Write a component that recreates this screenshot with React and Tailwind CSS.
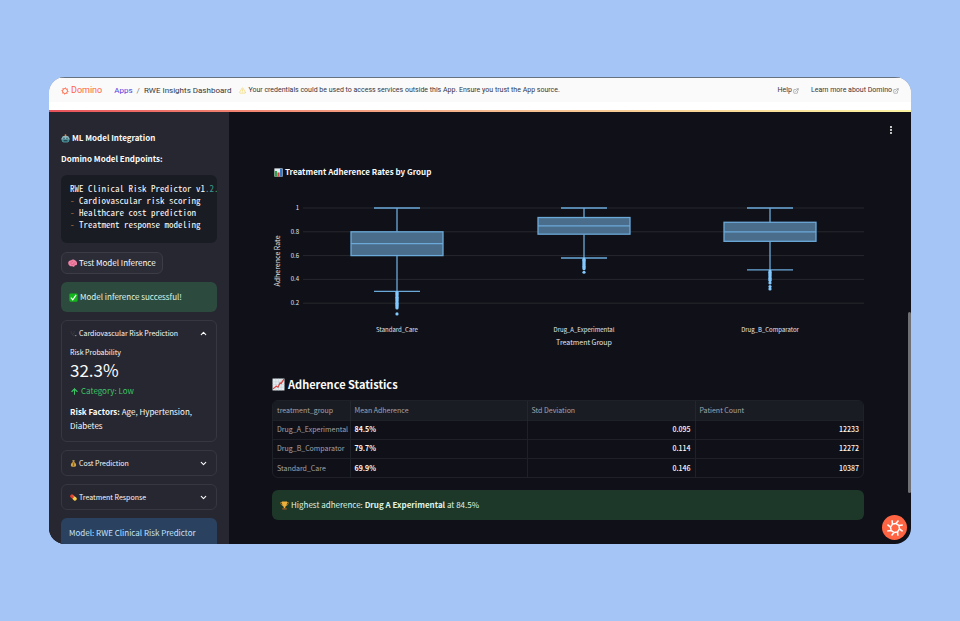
import React, { useState } from 'react';
import { ArrowUp, ChevronDown, ChevronUp, EllipsisVertical, ExternalLink, TriangleAlert } from 'lucide-react';

const groups = [
  { name: 'Standard_Care', x: 125, q1: 0.6, median: 0.7, q3: 0.8, low: 0.3, high: 1, outliers: [0.29, 0.28, 0.27, 0.26, 0.25, 0.24, 0.23, 0.22, 0.21, 0.2, 0.19, 0.18, 0.17, 0.16, 0.11] },
  { name: 'Drug_A_Experimental', x: 312, q1: 0.78, median: 0.85, q3: 0.92, low: 0.58, high: 1, outliers: [0.57, 0.56, 0.55, 0.54, 0.53, 0.52, 0.51, 0.5, 0.49, 0.46] },
  { name: 'Drug_B_Comparator', x: 498, q1: 0.72, median: 0.8, q3: 0.88, low: 0.48, high: 1, outliers: [0.47, 0.46, 0.45, 0.44, 0.43, 0.42, 0.41, 0.4, 0.39, 0.37, 0.34, 0.32] },
];

const stats = [
  { group: 'Drug_A_Experimental', mean: '84.5%', std: '0.095', count: 12233 },
  { group: 'Drug_B_Comparator', mean: '79.7%', std: '0.114', count: 12272 },
  { group: 'Standard_Care', mean: '69.9%', std: '0.146', count: 10387 },
];

const ticks = [1, 0.8, 0.6, 0.4, 0.2];
const yPos = (v) => 24 + (1 - v) * 119;

// Icons
function DominoMark({ className }) {
  return (
    <svg className={className} viewBox="0 0 24 24" fill="none" stroke="currentColor" strokeWidth="2" strokeLinejoin="round" aria-hidden="true">
      {[0, 45, 90, 135, 180, 225, 270, 315].map(a => (
        <path key={a} d="M9.4 6.8 L13.2 6 L16.6 1.9" transform={`rotate(${a} 12 12)`} />
      ))}
    </svg>
  );
}

function DominoRing({ className }) {
  return (
    <svg className={className} viewBox="0 0 24 24" fill="none" stroke="currentColor" strokeWidth="2.6" aria-hidden="true">
      <circle cx="12" cy="12" r="7.5" />
      {[0, 45, 90, 135, 180, 225, 270, 315].map(a => (
        <path key={a} d="M12 5 L13.5 1.5" transform={`rotate(${a} 12 12)`} />
      ))}
    </svg>
  );
}

function RobotIcon({ className }) {
  return (
    <svg className={className} viewBox="0 0 24 24" aria-hidden="true">
      <circle cx="12" cy="3" r="2.5" fill="#e08a4a" />
      <rect x="0.5" y="10" width="23" height="7" rx="2" fill="#5b8792" />
      <path d="M3 9a4 4 0 0 1 4-4h10a4 4 0 0 1 4 4v9a4 4 0 0 1-4 4H7a4 4 0 0 1-4-4z" fill="#8fb8c0" />
      <path d="M3 14h18v4a4 4 0 0 1-4 4H7a4 4 0 0 1-4-4z" fill="#3f8791" />
      <circle cx="8" cy="11" r="2" fill="#2b4c55" />
      <circle cx="16" cy="11" r="2" fill="#2b4c55" />
      <rect x="7" y="16" width="10" height="3" rx="1" fill="#264951" />
    </svg>
  );
}

function BrainIcon({ className }) {
  return (
    <svg className={className} viewBox="0 0 24 24" aria-hidden="true">
      <path d="M1 13C-1 7 4 3 8 3c3-3 9-2 11 1 4 1 6 6 5 10-1 3-4 3-6 3 0 3-4 5-6 2-3 1-10 0-11-6z" fill="#f283a5" />
      <path d="M5 12c2-3 4 0 6-3m-2-4c1 2 3 2 5 1m0 6c3-3 5 0 7-2M8 16c3-2 5-1 9-1" fill="none" stroke="#c14a74" strokeWidth="1.4" />
    </svg>
  );
}

function CheckIcon({ className }) {
  return (
    <svg className={className} viewBox="0 0 24 24" aria-hidden="true">
      <rect x="1" y="1" width="22" height="22" rx="3" fill="#12b51c" />
      <path d="M5 12.5l5 5.5L19 5" fill="none" stroke="#fff" strokeWidth="3" />
    </svg>
  );
}

function StethoscopeIcon({ className }) {
  return (
    <svg className={className} viewBox="0 0 24 24" fill="none" stroke="#44454e" strokeWidth="2" aria-hidden="true">
      <path d="M4 3v6a5 5 0 0 0 10 0V3M9 14v2a4 4 0 0 0 8 0" />
      <circle cx="20" cy="19" r="2" fill="#b5b6bc" stroke="none" />
    </svg>
  );
}

function MoneyBagIcon({ className }) {
  return (
    <svg className={className} viewBox="0 0 24 24" aria-hidden="true">
      <path d="M8 1h8l-2 6h-4z" fill="#d9b25a" />
      <path d="M9 7h6c4 3 6 7 6 11 0 4-3 5-9 5s-9-1-9-5c0-4 2-8 6-11z" fill="#d3a546" />
      <path d="M8 7h8" stroke="#7a5720" strokeWidth="2" />
      <path d="M15 12c-4-2-7 1-3 3s2 5-3 3M12 10v11" fill="none" stroke="#69491a" strokeWidth="1.5" />
    </svg>
  );
}

function PillIcon({ className }) {
  return (
    <svg className={className} viewBox="0 0 24 24" aria-hidden="true">
      <g transform="rotate(42 12 12)">
        <path d="M12 6H5a6 6 0 0 0 0 12h7z" fill="#e0402c" />
        <path d="M12 6h7a6 6 0 0 1 0 12h-7z" fill="#f6cf45" />
        <path d="M5 9h13" stroke="#fff" strokeOpacity="0.6" strokeWidth="1.5" />
      </g>
    </svg>
  );
}

function BarsIcon({ className }) {
  return (
    <svg className={className} viewBox="0 0 24 24" aria-hidden="true">
      <rect x="1" y="1" width="22" height="22" fill="#e3ebee" />
      <rect x="2" y="8" width="6" height="15" fill="#2f9e4f" />
      <rect x="9" y="12" width="6" height="11" fill="#d6423d" />
      <rect x="16" y="2" width="6" height="21" fill="#3577c4" />
    </svg>
  );
}

function TrendIcon({ className }) {
  return (
    <svg className={className} viewBox="0 0 24 24" aria-hidden="true">
      <rect x="1" y="1" width="22" height="22" fill="#e3ebee" />
      <path d="M1 7h22M1 12h22M1 17h22M7 1v22M12 1v22M17 1v22" stroke="#b7cbd3" strokeWidth="0.8" />
      <path d="M2 20l6-5 3 2 4-8 2 1 5-8" fill="none" stroke="#d6423d" strokeWidth="2.2" />
    </svg>
  );
}

function TrophyIcon({ className }) {
  return (
    <svg className={className} viewBox="0 0 24 24" aria-hidden="true">
      <path d="M6 4H2c0 5 2 7 6 8M18 4h4c0 5-2 7-6 8" fill="none" stroke="#d9952b" strokeWidth="2" />
      <path d="M5 1h14c0 8-2 13-5 14v4h-4v-4C7 14 5 9 5 1z" fill="#eeb03a" />
      <path d="M6 19h12v4H6z" fill="#8a5527" />
    </svg>
  );
}

function TopBar() {
  return (
    <header className="shrink-0 border-t border-[#66727f] bg-white font-['Roboto',sans-serif] text-[#35363f]">
      <div className="flex h-6 items-center bg-[#fafafa] px-3 pt-px">
        <a href="#home" className="flex items-center gap-[2px] text-[9px] text-[#ff6543]">
          <DominoRing className="size-2" />
          Domino
        </a>
        <nav className="ml-3 flex items-center gap-1 text-[8px]" aria-label="Breadcrumb">
          <a href="#apps" className="text-[#543fde]">Apps</a>
          <span className="text-[#77787f]">/</span>
          <span>RWE Insights Dashboard</span>
        </nav>
        <p className="ml-2 flex items-center gap-[2px] text-[7px]">
          <TriangleAlert className="size-[7px] text-[#f5d04c]" />
          Your credentials could be used to access services outside this App. Ensure you trust the App source.
        </p>
        <div className="ml-auto flex items-center gap-3 text-[7px]">
          <a href="#help" className="flex items-center gap-px">Help <ExternalLink className="size-[6px] text-[#77787f]" /></a>
          <a href="#learn" className="flex items-center gap-px">Learn more about Domino <ExternalLink className="size-[6px] text-[#77787f]" /></a>
        </div>
      </div>
      <div className="h-2" />
      <div className="h-[2px] bg-gradient-to-r from-[#e8525a] via-[#f5b98f] to-[#fbf3a0]" />
    </header>
  );
}

function Expander({ icon, title, open, onToggle, children }) {
  return (
    <section className="rounded-md border border-[#363740]">
      <button type="button" aria-expanded={open} onClick={onToggle} className="flex h-6 w-full items-center gap-[2px] px-2 text-[7px]">
        {icon}
        <span>{title}</span>
        {open
          ? <ChevronUp className="ml-auto size-[9px]" strokeWidth={3} />
          : <ChevronDown className="ml-auto size-[9px]" strokeWidth={3} />}
      </button>
      {open && <div className="px-2 pb-2">{children}</div>}
    </section>
  );
}

function Sidebar() {
  const [open, setOpen] = useState({ risk: true, cost: false, treatment: false });
  const toggle = (key) => setOpen({ ...open, [key]: !open[key] });

  return (
    <aside className="w-[180px] shrink-0 overflow-hidden bg-[#262730] px-3 pt-5">
      <h2 className="flex h-3 items-center gap-[2px] text-[8px] font-bold">
        <RobotIcon className="size-[9px]" />
        ML Model Integration
      </h2>
      <p className="mt-[9px] text-[8px] leading-3 font-bold">Domino Model Endpoints:</p>

      <pre className="mt-[10px] overflow-hidden rounded-md bg-[#1a1c24] px-[9px] pt-2 pb-3 font-['Noto_Sans_Mono_CJK_SC','Liberation_Mono',monospace] text-[9px] leading-3">
        {'RWE Clinical Risk Predictor v1'}<span className="text-[#3d9d8b]">.2.</span>{'\n'}
        <span className="text-[#a8683c]">-</span>{' Cardiovascular risk scoring\n'}
        <span className="text-[#a8683c]">-</span>{' Healthcare cost prediction\n'}
        <span className="text-[#a8683c]">-</span>{' Treatment response modeling'}
      </pre>

      <button type="button" className="mt-[9px] flex h-[22px] items-center gap-[2px] rounded-md border border-[#3b3c45] bg-[#2b2c36] px-[6px] text-[8px]">
        <BrainIcon className="size-[9px]" />
        Test Model Inference
      </button>

      <div role="status" className="mt-2 flex h-[30px] items-center gap-[2px] rounded-md bg-[#2d4a3e] px-2 text-[8px] text-[#dff5e6]">
        <CheckIcon className="size-[9px]" />
        Model inference successful!
      </div>

      <div className="mt-2 flex flex-col gap-2">
        <Expander icon={<StethoscopeIcon className="size-[7px]" />} title="Cardiovascular Risk Prediction" open={open.risk} onToggle={() => toggle('risk')}>
          <p className="mt-px text-[7px] leading-3">Risk Probability</p>
          <p className="text-[17px] leading-6">32.3%</p>
          <p className="mt-[3px] flex items-center gap-[2px] text-[8px] leading-3 text-[#3dc465]">
            <ArrowUp className="size-[9px]" strokeWidth={3} />
            Category: Low
          </p>
          <p className="mt-2 text-[8px] leading-[14px]"><b>Risk Factors:</b> Age, Hypertension, Diabetes</p>
        </Expander>
        <Expander icon={<MoneyBagIcon className="size-[7px]" />} title="Cost Prediction" open={open.cost} onToggle={() => toggle('cost')} />
        <Expander icon={<PillIcon className="size-[7px]" />} title="Treatment Response" open={open.treatment} onToggle={() => toggle('treatment')} />
        <div className="rounded-md bg-[#2a4260] px-2 py-2 text-[8px] leading-[14px] text-[#c2e2ff]">
          Model: RWE Clinical Risk Predictor v1.2.1
        </div>
      </div>
    </aside>
  );
}

function BoxPlot() {
  return (
    <svg viewBox="0 0 592 168" className="block w-full" role="img" aria-label="Treatment Adherence Rates by Group">
      {ticks.map(t => (
        <g key={t}>
          <line x1="31" x2="592" y1={yPos(t)} y2={yPos(t)} stroke="#27282e" />
          <text x="27" y={yPos(t) + 2} textAnchor="end" fontSize="6" fill="#e4e5ea">{t}</text>
        </g>
      ))}
      {groups.map(g => (
        <g key={g.name} stroke="#6ba9d9" strokeWidth="1.3" fill="none">
          <path d={`M${g.x - 23} ${yPos(g.high)}h46M${g.x} ${yPos(g.high)}V${yPos(g.q3)}M${g.x} ${yPos(g.q1)}V${yPos(g.low)}M${g.x - 23} ${yPos(g.low)}h46`} />
          <rect x={g.x - 46} y={yPos(g.q3)} width="92" height={yPos(g.q1) - yPos(g.q3)} fill="#4a6d8b" />
          <line x1={g.x - 46} x2={g.x + 46} y1={yPos(g.median)} y2={yPos(g.median)} />
          {g.outliers.map(o => <circle key={o} cx={g.x} cy={yPos(o)} r="1.6" fill="#83c9ff" stroke="none" />)}
          <text x={g.x} y="148" textAnchor="middle" fontSize="6" fill="#e4e5ea" stroke="none">{g.name}</text>
        </g>
      ))}
      <text x="312" y="161" textAnchor="middle" fontSize="7" fill="#e4e5ea">Treatment Group</text>
      <text transform="translate(8 77) rotate(-90)" textAnchor="middle" fontSize="7" fill="#e4e5ea">Adherence Rate</text>
    </svg>
  );
}

function StatsTable() {
  return (
    <div className="overflow-hidden rounded-md border border-[#1f2129]">
      <table className="w-full table-fixed border-collapse text-[7px]">
        <colgroup>
          <col className="w-[77px]" />
          <col className="w-[30%]" />
          <col />
          <col />
        </colgroup>
        <thead>
          <tr className="h-[19px] bg-[#1a1c24] text-left text-[#a3a4ab]">
            <th className="px-1 font-normal">treatment_group</th>
            <th className="border-l border-[#24262e] px-1 font-normal">Mean Adherence</th>
            <th className="border-l border-[#24262e] px-1 font-normal">Std Deviation</th>
            <th className="border-l border-[#24262e] px-1 font-normal">Patient Count</th>
          </tr>
        </thead>
        <tbody>
          {stats.map(s => (
            <tr key={s.group} className="h-[19px] border-t border-[#1f2129]">
              <th scope="row" className="px-1 text-left font-normal whitespace-nowrap text-[#a3a4ab]">{s.group}</th>
              <td className="border-l border-[#1f2129] px-1 font-bold">{s.mean}</td>
              <td className="border-l border-[#1f2129] px-1 text-right font-medium">{s.std}</td>
              <td className="border-l border-[#1f2129] px-1 text-right font-medium">{s.count}</td>
            </tr>
          ))}
        </tbody>
      </table>
    </div>
  );
}

export default function App() {
  return (
    <div className="h-screen bg-[#a5c5f7] px-[49px] py-[77px]">
      <div className="relative flex h-full flex-col overflow-hidden rounded-2xl bg-[#101118] font-['Noto_Sans_CJK_SC',sans-serif] text-[#fafafa]">
        <TopBar />
        <div className="flex min-h-0 flex-1">
          <Sidebar />
          <main className="min-w-0 flex-1 overflow-hidden pr-[47px] pl-[43px]">
            <div className="-mr-8 flex h-9 items-center justify-end">
              <button type="button" aria-label="Main menu"><EllipsisVertical className="size-[10px]" strokeWidth={3} /></button>
            </div>
            <section className="mt-3">
              <h3 className="flex h-6 items-center gap-[2px] pl-[2px] text-[8px] font-bold">
                <BarsIcon className="size-[9px]" />
                Treatment Adherence Rates by Group
              </h3>
              <BoxPlot />
            </section>
            <h2 className="mt-5 flex h-6 items-center gap-[3px] text-[11px] font-bold">
              <TrendIcon className="size-[13px]" />
              Adherence Statistics
            </h2>
            <div className="mt-1"><StatsTable /></div>
            <p className="mt-3 flex h-[30px] items-center gap-[2px] rounded-md bg-[#1d3829] px-2 text-[8px] text-[#dff5e6]">
              <TrophyIcon className="size-[9px]" />
              <span>Highest adherence: <b>Drug A Experimental</b> at 84.5%</span>
            </p>
          </main>
        </div>
        {/* Scroll thumb and assistant button */}
        <div className="absolute right-0 bottom-[51px] h-[181px] w-[3px] rounded-full bg-[#6f7076]" />
        <button type="button" aria-label="Domino assistant" className="absolute right-1 bottom-1 flex size-[25px] items-center justify-center rounded-full bg-[#ff6543] text-white">
          <DominoMark className="size-[18px]" />
        </button>
      </div>
    </div>
  );
}
